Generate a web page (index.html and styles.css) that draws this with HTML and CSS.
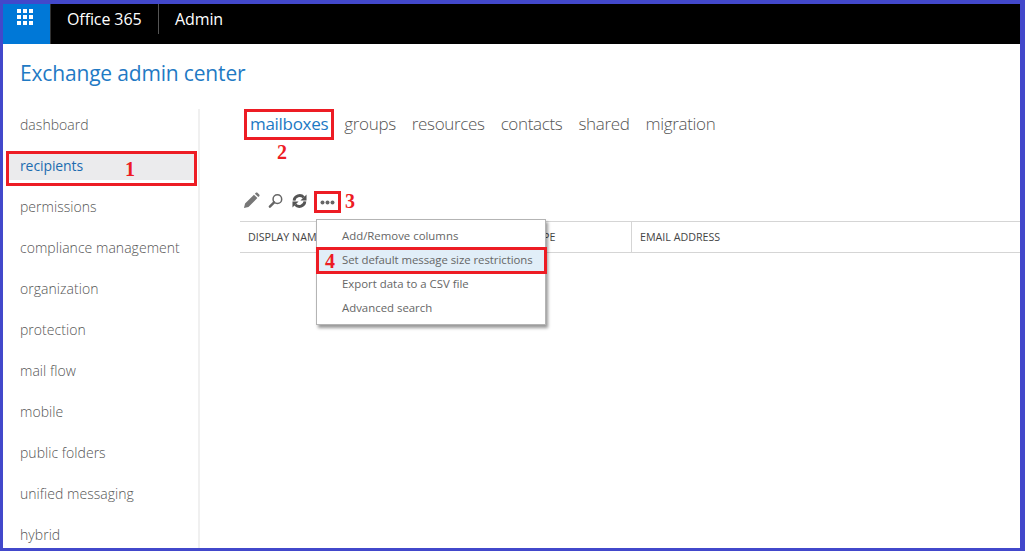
FILE: index.html
```html
<!DOCTYPE html>
<html lang="en">
<head>
<meta charset="utf-8">
<title>Exchange admin center</title>
<link rel="stylesheet" href="styles.css">
</head>
<body>
<div class="frame">
  <header class="topbar">
    <div class="tile">
      <svg class="waffle" width="16" height="16" viewBox="0 0 16 16" fill="#fff">
        <rect x="0" y="0" width="4" height="4"/><rect x="6" y="0" width="4" height="4"/><rect x="12" y="0" width="4" height="4"/>
        <rect x="0" y="6" width="4" height="4"/><rect x="6" y="6" width="4" height="4"/><rect x="12" y="6" width="4" height="4"/>
        <rect x="0" y="12" width="4" height="4"/><rect x="6" y="12" width="4" height="4"/><rect x="12" y="12" width="4" height="4"/>
      </svg>
    </div>
    <div class="brand">Office 365</div>
    <div class="app">Admin</div>
  </header>
  <h1 class="title">Exchange admin center</h1>
  <div class="content">
    <nav class="side">
      <a class="side-item">dashboard</a>
      <a class="side-item active">recipients</a>
      <a class="side-item">permissions</a>
      <a class="side-item">compliance management</a>
      <a class="side-item">organization</a>
      <a class="side-item">protection</a>
      <a class="side-item">mail flow</a>
      <a class="side-item">mobile</a>
      <a class="side-item">public folders</a>
      <a class="side-item">unified messaging</a>
      <a class="side-item">hybrid</a>
    </nav>
    <main class="main">
      <div class="tabs">
        <a class="tab active">mailboxes</a>
        <a class="tab">groups</a>
        <a class="tab">resources</a>
        <a class="tab">contacts</a>
        <a class="tab">shared</a>
        <a class="tab">migration</a>
      </div>
      <div class="tools">
        <svg class="tool" width="17" height="17" viewBox="0 0 18 18"><path fill="#777" d="M1 17l1.200-4.800L11.600 2.800l3.600 3.600-9.400 9.400zM12.600 1.800l1-1c.5-.5 1.200-.5 1.700 0l1.900 1.900c.5.5.5 1.200 0 1.700l-1 1z"/></svg>
        <svg class="tool" width="15" height="16" viewBox="0 0 16 16"><circle cx="10" cy="6" r="4.600" fill="none" stroke="#666" stroke-width="1.600"/><path stroke="#666" stroke-width="2.600" stroke-linecap="round" d="M6.500 9.500L2 14"/></svg>
        <svg class="tool refresh" width="15" height="16" viewBox="0 0 16 16"><path fill="none" stroke="#555" stroke-width="3" d="M2.200 7.500A5.900 5.900 0 0 1 12.500 4.200M13.800 8.500A5.900 5.900 0 0 1 3.500 11.800"/><path fill="#555" d="M15.500 1v6.500H9zM.5 15V8.500H7z"/></svg>
        <svg class="more" width="15" height="5" viewBox="0 0 15 5" fill="#666"><circle cx="2.500" cy="2.500" r="2"/><circle cx="7.500" cy="2.500" r="2"/><circle cx="12.500" cy="2.500" r="2"/></svg>
      </div>
      <div class="thead">
        <div class="th th-name">DISPLAY NAME</div>
        <div class="th th-type">MAILBOX TYPE</div>
        <div class="th th-mail">EMAIL ADDRESS</div>
      </div>
    </main>
  </div>

  <ul class="menu">
    <li class="menu-item">Add/Remove columns</li>
    <li class="menu-item hover">Set default message size restrictions</li>
    <li class="menu-item">Export data to a CSV file</li>
    <li class="menu-item">Advanced search</li>
  </ul>

  <div class="mark mark-1"></div>
  <div class="mark mark-2"></div>
  <div class="mark mark-3"></div>
  <div class="mark mark-4"></div>
  <span class="num num-1">1</span>
  <span class="num num-2">2</span>
  <span class="num num-3">3</span>
  <span class="num num-4">4</span>
</div>
</body>
</html>
```
FILE: styles.css
```css
* { box-sizing: border-box; }
html, body { margin: 0; padding: 0; height: 100%; overflow: hidden; background: #fff; }
body { font-family: "Open Sans", "Noto Sans", sans-serif; }
.frame {
  position: relative;
  width: 1025px;
  height: 551px;
  border-style: solid;
  border-color: #4248cb;
  border-width: 4px 5px 3px 3px;
  overflow: hidden;
  display: flex;
  flex-direction: column;
}
.topbar {
  height: 40px;
  flex: none;
  background: #000;
  color: #fff;
  display: flex;
  align-items: stretch;
}
.tile {
  width: 48px;
  background: #0078d7;
  border-right: 1px solid #333;
  display: flex;
  justify-content: flex-start;
  padding: 5px 0 0 14px;
}
.waffle { display: block; }
.brand {
  width: 108px;
  padding-left: 16px;
  font-size: 16px;
  line-height: 31px;
  height: 30px;
  border-right: 1px solid #555;
  letter-spacing: -0.1px;
}
.app {
  padding-left: 16px;
  font-size: 16px;
  line-height: 31px;
  letter-spacing: -0.1px;
}
.title {
  margin: 0;
  flex: none;
  height: 65px;
  padding: 14px 0 0 17px;
  font-size: 21px;
  font-weight: 400;
  line-height: 30px;
  color: #1f7ac4;
  letter-spacing: -0.17px;
}
.content {
  flex: 1;
  display: flex;
  min-height: 0;
}
.side {
  width: 197px;
  flex: none;
  border-right: 2px solid #f0f0f0;
  display: flex;
  flex-direction: column;
}
.side-item {
  flex: none;
  height: 41px;
  padding-left: 17px;
  font-size: 14px;
  font-weight: 300;
  line-height: 31px;
  color: #555;
  letter-spacing: 0.04px;
}
.side-item.active {
  color: #1c6cb0;
  font-weight: 400;
  letter-spacing: -0.1px;
  margin: 3px 0 0 3px;
  height: 38px;
  width: 191px;
  padding: 0 0 0 14px;
  line-height: 25px;
  background: linear-gradient(#ebebed 0, #ebebed 27px, #fff 27px) no-repeat;
}
.main {
  flex: 1;
  min-width: 0;
  padding-left: 40px;
}
.tabs {
  display: flex;
  gap: 16px;
  height: 71px;
  padding: 0 0 0 10px;
}
.tab {
  font-size: 17px;
  font-weight: 300;
  line-height: 30px;
  color: #555;
  letter-spacing: -0.33px;
}
.tab.active { color: #1c79c4; font-weight: 400; letter-spacing: -0.3px; }
.tools {
  height: 41px;
  display: flex;
  align-items: center;
  padding-left: 3px;
  gap: 8px;
}
.tool { display: block; flex: none; }
.refresh { margin-left: 1px; }
.more { display: block; flex: none; margin: 4px 0 0 5px; }
.thead {
  display: flex;
  height: 32px;
  border-top: 1px solid #d5d5d5;
  border-bottom: 1px solid #d5d5d5;
}
.th {
  font-size: 10.700px;
  line-height: 30px;
  color: #444;
  padding-left: 8px;
  white-space: nowrap;
}
.th-name { width: 200px; }
.th-type { width: 192px; border-right: 1px solid #d5d5d5; padding-left: 42px; }
.th-mail { flex: 1; }
.menu {
  position: absolute;
  left: 313px;
  top: 215px;
  width: 230px;
  height: 106px;
  margin: 0;
  padding: 5px 0 0;
  list-style: none;
  background: #fff;
  border: 1px solid #b4b4b4;
  box-shadow: 2px 3px 3px rgba(0, 0, 0, 0.4);
}
.menu-item {
  height: 24px;
  padding-left: 25px;
  font-size: 11.400px;
  line-height: 22px;
  color: #666;
  white-space: nowrap;
}
.menu-item.hover { background: #e1eef8; letter-spacing: -0.05px; }
.mark { position: absolute; border: 3px solid #ed1c24; }
.mark-1 { left: 3px; top: 147px; width: 191px; height: 35px; }
.mark-2 { left: 241px; top: 105px; width: 90px; height: 31px; }
.mark-3 { left: 311px; top: 187px; width: 27px; height: 22px; }
.mark-4 { left: 313px; top: 243px; width: 231px; height: 27px; }
.num {
  position: absolute;
  font-family: "Liberation Serif", serif;
  font-weight: 700;
  font-size: 20px;
  line-height: 20px;
  color: #ed1c24;
}
.num-1 { left: 122px; top: 155px; }
.num-2 { left: 274px; top: 138px; }
.num-3 { left: 342px; top: 187px; }
.num-4 { left: 322px; top: 247px; }
```
